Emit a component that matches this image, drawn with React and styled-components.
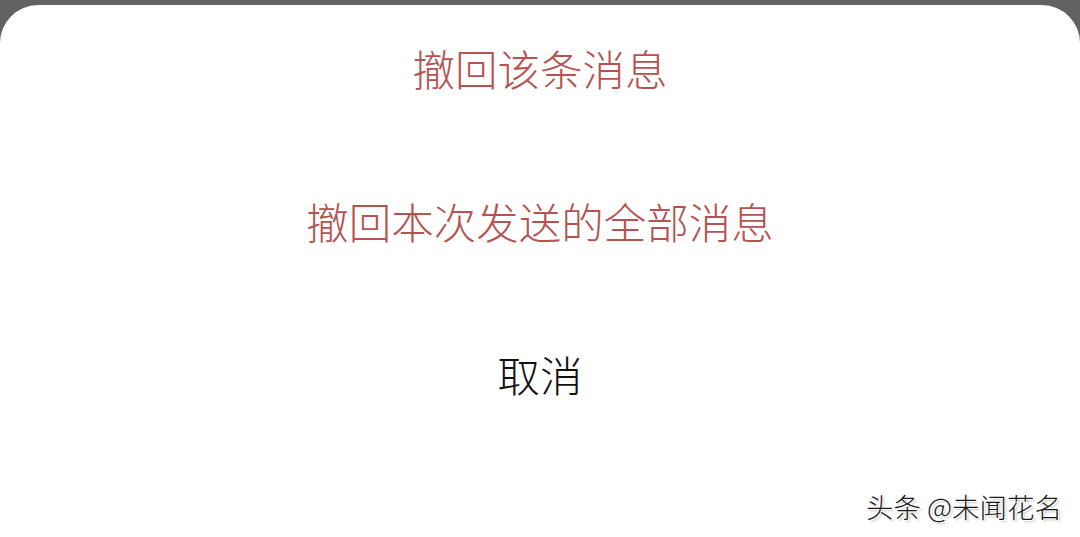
import styled, { createGlobalStyle } from "styled-components";

const GlobalStyle = createGlobalStyle`
  html, body {
    margin: 0;
    padding: 0;
    background: #626262;
    height: 100%;
  }
  #root {
    height: 100%;
  }
`;

const Page = styled.div`
  height: 537px;
  padding-top: 5px;
  box-sizing: border-box;
  font-family: "Noto Sans CJK SC", "Noto Sans", sans-serif;
  overflow: hidden;
`;

const Sheet = styled.div`
  position: relative;
  height: 100%;
  background: #fff;
  border-radius: 38px 38px 0 0;
  padding-top: 33px;
  box-sizing: border-box;
  display: flex;
  flex-direction: column;
  gap: 93px;
`;

const Action = styled.div`
  height: 60px;
  line-height: 60px;
  text-align: center;
  font-size: 42.5px;
  font-weight: 300;
  color: ${({ $danger }) => ($danger ? "#b6524f" : "#111")};
  cursor: pointer;
`;

const Watermark = styled.div`
  position: absolute;
  right: 18px;
  bottom: 11px;
  font-size: 27.5px;
  font-weight: 300;
  color: #1a1a1a;
  text-shadow: 1px 1px 0 #fff, -1px -1px 0 #fff, 2px 2px 2px rgba(0, 0, 0, 0.25);
`;

export default function App() {
  return (
    <>
      <GlobalStyle />
      <Page>
        <Sheet>
          <Action $danger>撤回该条消息</Action>
          <Action $danger>撤回本次发送的全部消息</Action>
          <Action>取消</Action>
          <Watermark>头条 @未闻花名</Watermark>
        </Sheet>
      </Page>
    </>
  );
}
